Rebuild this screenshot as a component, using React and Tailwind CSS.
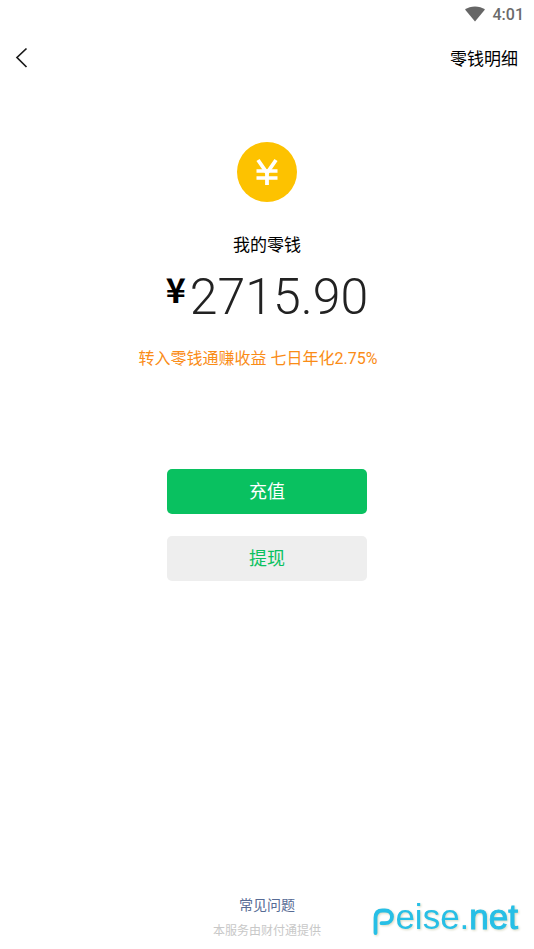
const BALANCE = "2715.90";

function StatusBar() {
  return (
    <div className="flex h-7 items-center justify-end gap-2 pr-[10px]">
      <svg width="20" height="16" viewBox="0 0 20 16" fill="#666666" aria-hidden="true">
        <path d="M10 15.500 0 3.600C2.800 1.500 6.200 .4 10 .4s7.200 1.100 10 3.200z" />
      </svg>
      <span className="pt-0.5 font-[Roboto,sans-serif] text-base leading-6 font-medium text-[#6b6b6b]">
        4:01
      </span>
    </div>
  );
}

function Header() {
  return (
    <header className="flex h-[60px] items-center justify-between pr-4 pl-[14px]">
      <button type="button" aria-label="返回">
        <svg width="14" height="22" viewBox="0 0 14 22" fill="none" stroke="#1a1a1a" strokeWidth="1.700" aria-hidden="true">
          <path d="M12.500 1.500 3 10.500l9.500 9.500" />
        </svg>
      </button>
      <button type="button" className="pt-0.5 text-[17px] leading-6 text-black">
        零钱明细
      </button>
    </header>
  );
}

function CoinIcon() {
  return (
    <svg width="60" height="60" viewBox="0 0 60 60" aria-hidden="true">
      <circle cx="30" cy="30" r="30" fill="#fdc200" />
      <g fill="none" stroke="#ffffff" strokeWidth="3.800">
        <path d="M21 18l9 13 9-13" />
        <path d="M30 29v14" />
        <path d="M19.500 29h21M19.500 36h21" strokeWidth="3.600" />
      </g>
    </svg>
  );
}

function Watermark() {
  return (
    <div className="absolute right-4 bottom-3 flex items-end text-[#27bfe6] drop-shadow-[1px_1px_1px_#d8d8c0]">
      <svg width="22" height="29" viewBox="0 0 22 29" fill="none" stroke="currentColor" strokeWidth="3.800" strokeLinecap="round" aria-hidden="true">
        <path d="M2.500 25V10C2.500 5 5 2.500 9.500 2.500h2.500c4.500 0 7 3 7 6.300s-2.500 6.400-7 6.400H8.500" />
      </svg>
      <span className="font-['Liberation_Sans',sans-serif] text-[35px] leading-10">
        eise.<span className="[-webkit-text-stroke:1px_currentColor]">net</span>
      </span>
    </div>
  );
}

export default function App() {
  return (
    <div className="relative flex min-h-screen flex-col bg-white font-[Roboto,'Noto_Sans_CJK_SC',sans-serif]">
      <StatusBar />
      <Header />

      <main className="flex grow flex-col items-center pt-[54px]">
        <CoinIcon />
        <h1 className="mt-[31px] text-[17px] leading-6 text-black">我的零钱</h1>
        <p className="mt-3 flex items-start gap-1 text-[#222222]">
          <span className="font-['Noto_Sans_CJK_SC',sans-serif] text-[34px] leading-10 font-bold text-black">
            ¥
          </span>
          <span className="font-[Roboto,sans-serif] text-[50px] leading-[56px] font-light">
            {BALANCE}
          </span>
        </p>
        <a href="#lqt" className="mt-[22px] mr-[18px] text-base leading-6 text-[#fa8c16]">
          转入零钱通赚收益 七日年化2.75%
        </a>

        <div className="mt-[98px] flex w-[200px] flex-col gap-[22px]">
          <button type="button" className="h-[45px] rounded-[5px] bg-[#09c160] text-lg text-white">
            充值
          </button>
          <button type="button" className="h-[45px] rounded-[5px] bg-[#eeeeee] text-lg text-[#09c160]">
            提现
          </button>
        </div>
      </main>

      <footer className="flex flex-col items-center gap-0.5 pb-1.5">
        <a href="#faq" className="text-sm leading-6 text-[#576b95]">
          常见问题
        </a>
        <p className="text-xs leading-6 text-[#c8c8c8]">本服务由财付通提供</p>
      </footer>

      <Watermark />
    </div>
  );
}
